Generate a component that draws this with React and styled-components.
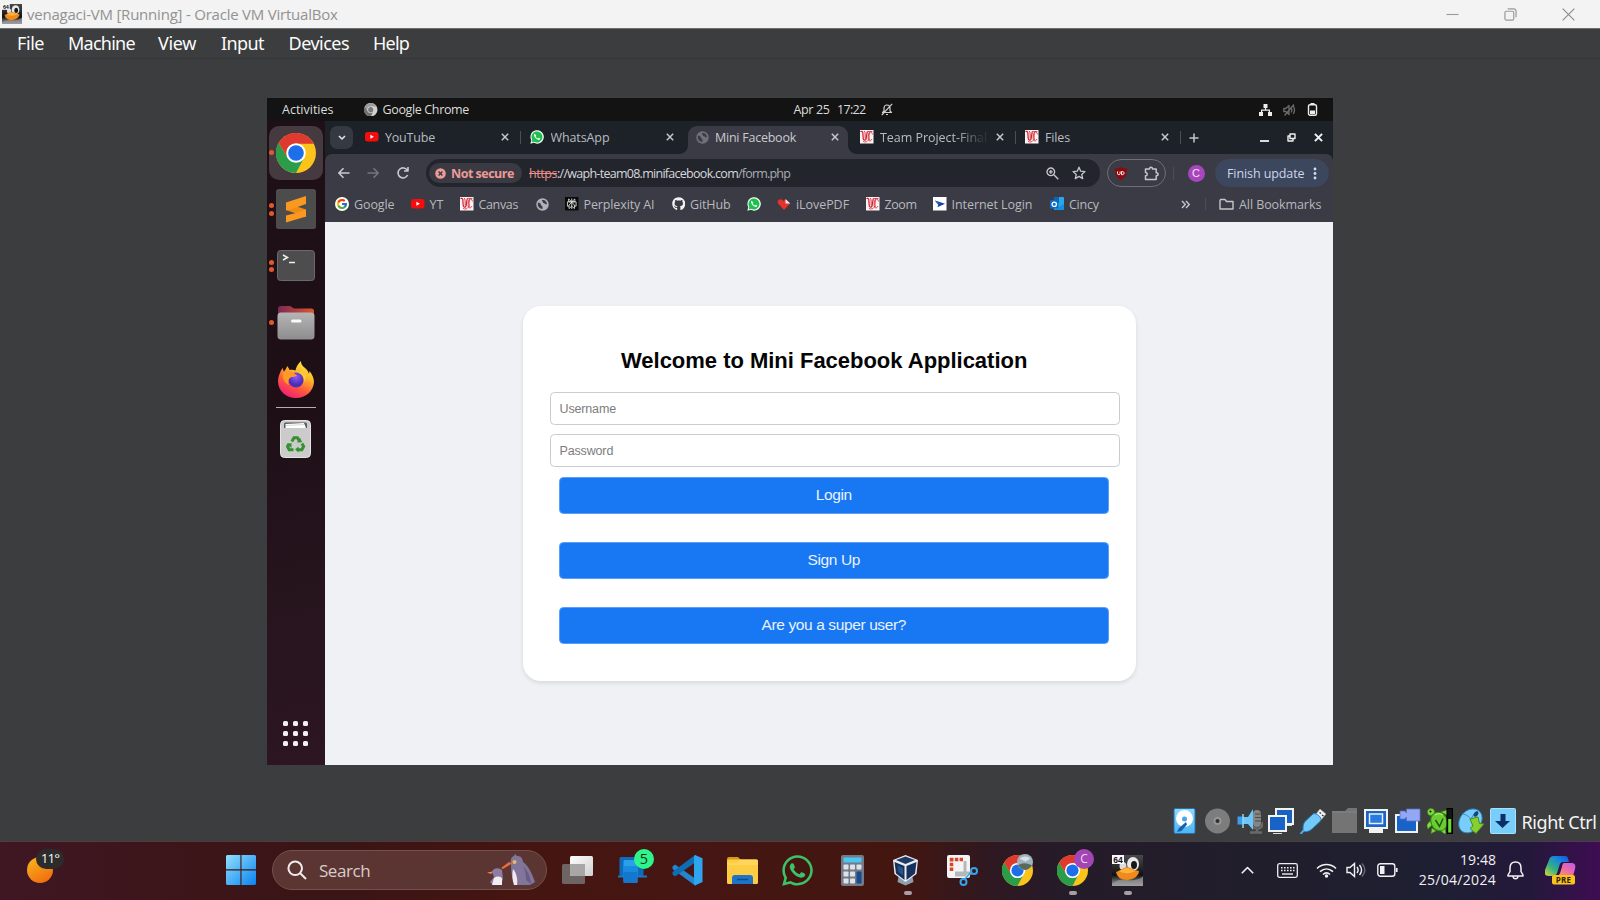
import React from 'react';
import styled, { createGlobalStyle, css } from 'styled-components';
import { FcGoogle } from 'react-icons/fc';
import { FaWhatsapp, FaGithub } from 'react-icons/fa';

const Global = createGlobalStyle`
  body { margin: 0; background: #3b3d3e; }
  * { box-sizing: border-box; }
  svg { display: block; flex: none; }
`;

const ubuntu = '"Open Sans", "Noto Sans", sans-serif';
const segoe = '"Open Sans", "Noto Sans", sans-serif';
const tahoma = '"Noto Sans", sans-serif';
const arial = '"Liberation Sans", Arial, sans-serif';

/* ---------- host window ---------- */
const Desktop = styled.div`
  width: 1600px;
  height: 900px;
  overflow: hidden;
  display: flex;
  flex-direction: column;
  background: #3b3d3e;
`;
const TitleBar = styled.header`
  height: 28px;
  flex: none;
  display: flex;
  align-items: center;
  padding-left: 2px;
  background: #f3f3f3;
  color: #929292;
  font: 15px ${segoe};
  letter-spacing: -0.22px;
`;
const TitleText = styled.span`
  flex: 1;
  padding: 0 0 1px 5px;
  white-space: pre;
`;
const WindowButtons = styled.div`
  display: flex;
  align-items: center;
  width: 170px;
  gap: 45px;
  padding-left: 16px;
`;
const MenuBar = styled.nav`
  height: 31px;
  flex: none;
  display: flex;
  align-items: center;
  padding: 0 0 1px 17px;
  border-top: 1px solid #6d6f70;
  border-bottom: 1px solid #353637;
  background: #3b3d3e;
  color: #fbfbfb;
  font: 18px ${tahoma};
`;
const MenuItem = styled.span`
  width: ${p => p.$w}px;
  letter-spacing: ${p => p.$ls}px;
`;
const Guest = styled.main`
  width: 1066px;
  height: 667px;
  margin: 39px 0 0 267px;
  flex: none;
  display: flex;
  flex-direction: column;
  overflow: hidden;
  font: 12.5px ${ubuntu};
`;

/* ---------- guest top bar ---------- */
const TopBar = styled.div`
  height: 23px;
  flex: none;
  display: flex;
  align-items: center;
  padding-left: 15px;
  background: #131313;
  color: #dcdcdc;
`;
const TopLabel = styled.span`
  width: ${p => p.$w}px;
  padding-left: ${p => p.$l || 0}px;
  white-space: pre;
  letter-spacing: ${p => p.$ls || 0}px;
`;
const TopIcons = styled.div`
  display: flex;
  align-items: center;
  gap: 11px;
  margin-left: 365.5px;
`;
const GuestBody = styled.div`
  flex: 1;
  display: flex;
  min-height: 0;
`;

/* ---------- dock ---------- */
const Dock = styled.aside`
  width: 58px;
  flex: none;
  display: flex;
  flex-direction: column;
  padding-top: 3.5px;
  background: linear-gradient(165deg, #1f0f17 0%, #1e0f17 45%, #26141d 70%, #2c1621 100%);
`;
const DockSlot = styled.div`
  height: 56.6px;
  flex: none;
  display: flex;
  align-items: center;
`;
const DockDots = styled.div`
  width: 9px;
  display: flex;
  flex-direction: column;
  align-items: center;
  gap: 2.5px;
  flex: none;
  margin-right: -7.5px;
  z-index: 1;
  i { width: 5px; height: 5px; border-radius: 50%; background: #e0592c; }
`;
const DockTile = styled.div`
  width: 54px;
  height: 54px;
  border-radius: 10px;
  display: grid;
  place-items: center;
  background: ${p => (p.$active ? '#463a41' : 'transparent')};
`;
const DockRule = styled.div`
  height: 1px;
  flex: none;
  margin: 0 9px 2px;
  background: #b3acb0;
`;
const DockSpacer = styled.div`flex: 1;`;
const AppGrid = styled.div`
  display: grid;
  grid-template-columns: repeat(3, 5px);
  gap: 5px;
  margin: 0 0 19px 16px;
  i { width: 5px; height: 5px; border-radius: 1.5px; background: #f4eff2; }
`;

/* ---------- browser ---------- */
const Browser = styled.section`
  flex: 1;
  display: flex;
  flex-direction: column;
  min-width: 0;
  background: #1c2228;
`;
const TabStrip = styled.div`
  height: 33px;
  flex: none;
  display: flex;
  align-items: center;
  padding-left: 5px;
  color: #b9bbc0;
`;
const TabSearch = styled.div`
  width: 23px;
  height: 23px;
  margin-right: 4.5px;
  border-radius: 7px;
  display: grid;
  place-items: center;
  background: #353941;
`;
const Tab = styled.div`
  width: 165px;
  height: 33px;
  flex: none;
  display: flex;
  align-items: center;
  padding: 0 14px 1px 7.5px;
  position: relative;
  ${p => p.$active && css`
    width: 160px;
    height: 28px;
    margin: 5px 5px 0 0;
    padding: 0 9px 6px 8px;
    background: #3a3b44;
    border-radius: 9px 9px 0 0;
    color: #c9cacf;
    &::before, &::after {
      content: '';
      position: absolute;
      bottom: 0;
      width: 8px;
      height: 8px;
    }
    &::before { left: -8px; background: radial-gradient(circle at 0 0, transparent 7.5px, #3a3b44 8px); }
    &::after { right: -8px; background: radial-gradient(circle at 100% 0, transparent 7.5px, #3a3b44 8px); }
  `}
`;
const TabText = styled.span`
  flex: 1;
  margin: 0 7px 0 6.5px;
  overflow: hidden;
  white-space: nowrap;
  letter-spacing: ${p => p.$ls || 0}px;
  ${p => p.$fade && css`mask-image: linear-gradient(90deg, #000 76px, rgba(0,0,0,.12) 103px);`}
`;
const Divider = styled.i`
  width: 1px;
  height: ${p => p.$h || 13}px;
  flex: none;
  background: #4b4e56;
  margin-left: ${p => p.$l || 0}px;
  margin-right: ${p => p.$r || 0}px;
`;
const TabDivider = styled(Divider)`
  position: absolute;
  right: 1.5px;
  top: 10px;
`;
const StripButtons = styled.div`
  display: flex;
  align-items: center;
  padding-left: 6px;
`;
const WindowControl = styled.div`margin-left: ${p => p.$l}px;`;
const Toolbar = styled.div`
  height: 38px;
  flex: none;
  display: flex;
  align-items: center;
  padding: 0 4.5px 0 11.5px;
  background: #3a3b44;
  border-radius: 7px 7px 0 0;
`;
const NavIcons = styled.div`
  display: flex;
  align-items: center;
  gap: 15.5px;
  width: 89px;
`;
const Omnibox = styled.div`
  width: 674px;
  height: 28px;
  flex: none;
  display: flex;
  align-items: center;
  padding: 0 13.5px 0 3.5px;
  border-radius: 14px;
  background: #23252d;
  color: #d6d7dc;
`;
const SecurityChip = styled.div`
  width: 93px;
  height: 20px;
  flex: none;
  display: flex;
  align-items: center;
  gap: 5px;
  padding-left: 6px;
  margin-right: 7px;
  border-radius: 10px;
  background: #3b3a42;
  color: #ec9b98;
  font-weight: 700;
  letter-spacing: -0.5px;
  white-space: nowrap;
`;
const Scheme = styled.span`
  color: #ec8f8b;
  text-decoration: line-through;
  letter-spacing: -0.44px;
`;
const Host = styled.span`letter-spacing: -0.72px;`;
const Path = styled.span`
  flex: 1;
  color: #aaacb2;
  letter-spacing: -0.8px;
`;
const OmniIcons = styled.div`
  display: flex;
  align-items: center;
  gap: 13.5px;
`;
const ExtensionPill = styled.div`
  width: 59px;
  height: 28px;
  flex: none;
  margin-left: 7px;
  padding: 0 5.5px 0 7.5px;
  display: flex;
  align-items: center;
  justify-content: space-between;
  border: 1px solid #6d6f77;
  border-radius: 14px;
`;
const Avatar = styled.div`
  width: 17px;
  height: 17px;
  flex: none;
  border-radius: 50%;
  background: #a847bd;
  color: #f3e4f6;
  font: 11px/16.5px ${arial};
  text-align: center;
`;
const UpdateButton = styled.div`
  width: 114px;
  height: 28px;
  flex: none;
  margin-left: 10px;
  padding: 0 12px 0 12.5px;
  border-radius: 14px;
  display: flex;
  align-items: center;
  justify-content: space-between;
  background: #3c465d;
  color: #cdd6ea;
  letter-spacing: -0.09px;
`;
const Bookmarks = styled.div`
  height: 30px;
  flex: none;
  display: flex;
  align-items: center;
  padding: 0 0 6px 10px;
  background: #3a3b44;
  color: #b7b9be;
`;
const Bookmark = styled.div`
  width: ${p => p.$w}px;
  flex: none;
  display: flex;
  align-items: center;
  gap: 5px;
  white-space: nowrap;
  letter-spacing: ${p => p.$ls || 0}px;
`;
const GoogleDisc = styled.span`
  width: 14px;
  height: 14px;
  flex: none;
  border-radius: 50%;
  display: grid;
  place-items: center;
  background: #fff;
`;

/* ---------- page ---------- */
const Page = styled.div`
  flex: 1;
  display: flex;
  align-items: flex-start;
  background: #f0f1f5;
`;
const Card = styled.form`
  width: 613.5px;
  height: 375px;
  margin: 84px 0 0 197.5px;
  padding: 37.5px 16px 0 27.5px;
  border-radius: 18px;
  background: #fff;
  box-shadow: 0 2px 4px rgba(0, 0, 0, .1);
  font-family: ${arial};
`;
const Heading = styled.h1`
  height: 34px;
  margin: 0 0 14.5px 71px;
  font: 700 22px/34px ${arial};
  letter-spacing: -0.02px;
  color: #050505;
  white-space: nowrap;
`;
const Field = styled.div`
  height: 33px;
  margin-bottom: 9.25px;
  padding-left: 8.5px;
  border: 1px solid #ccc;
  border-radius: 4.5px;
  color: #7d7d7d;
  font-size: 12.5px;
  line-height: 32px;
  letter-spacing: -0.15px;
`;
const Action = styled.div`
  width: 549.5px;
  height: 37px;
  margin: 0 0 28px 9px;
  border: 1px solid #5c9df6;
  border-radius: 4.5px;
  background: #1877f2;
  color: #e9f2fe;
  font-size: 15.5px;
  line-height: 34px;
  letter-spacing: -0.38px;
  text-align: center;
`;

/* ---------- VM status bar ---------- */
const StatusBar = styled.div`
  height: 76px;
  flex: none;
  display: flex;
  align-items: center;
  justify-content: flex-end;
  gap: 5.65px;
  padding: 36px 3px 0 0;
  color: #f4f4f4;
  font: 18px ${tahoma};
  letter-spacing: -0.42px;
`;
const HostKey = styled.span`
  width: 75.5px;
  padding-top: 2px;
  white-space: nowrap;
`;

/* ---------- taskbar ---------- */
const Taskbar = styled.footer`
  height: 59px;
  flex: none;
  display: flex;
  align-items: center;
  padding-bottom: 2px;
  border-top: 1px solid rgba(120, 100, 100, .45);
  background: linear-gradient(90deg, #3f1724 0, #3b1518 200px, #3a1515 350px, #451511 520px, #451613 700px, #431610 900px, #301820 985px, #251b29 1060px, #211e2b 1250px, #1e1f33 1440px, #24183a 1530px, #3e0d53 1600px);
  font-family: ${segoe};
  color: #f2f0f3;
`;
const Weather = styled.div`
  width: 226px;
  padding-left: 27px;
  flex: none;
  position: relative;
`;
const Sun = styled.div`
  width: 26px;
  height: 26px;
  border-radius: 50%;
  background: linear-gradient(150deg, #f9b91d, #f0620f);
`;
const Temperature = styled.div`
  position: absolute;
  left: 36px;
  top: -8px;
  width: 28px;
  height: 20px;
  border-radius: 10px;
  background: #2d2c2b;
  color: #f5f5f5;
  font-size: 13.5px;
  line-height: 19px;
  letter-spacing: -0.9px;
  text-align: center;
`;
const SearchBox = styled.div`
  width: 275px;
  height: 40px;
  flex: none;
  margin: 0 3px 0 16px;
  padding: 0 11px 0 14px;
  display: flex;
  align-items: center;
  border: 1px solid #754f4c;
  border-radius: 20px;
  background: #5b3532;
  color: #d9cccb;
  font-size: 17px;
  letter-spacing: -0.45px;
  span { flex: 1; padding: 0 0 0 12px; }
`;
const TaskIcon = styled.div`
  width: 55px;
  height: 58px;
  flex: none;
  display: flex;
  flex-direction: column;
  align-items: center;
  padding-top: ${p => p.$top || 14}px;
  position: relative;
  ${p => p.$open && css`
    &::after {
      content: '';
      width: 8px;
      height: 4px;
      margin-top: 5px;
      border-radius: 2px;
      background: #a89ea5;
    }
  `}
`;
const Badge = styled.div`
  position: absolute;
  left: 29px;
  top: 8px;
  width: 20px;
  height: 20px;
  border-radius: 50%;
  background: ${p => p.$bg};
  color: ${p => p.$fg};
  font-size: ${p => p.$size}px;
  line-height: 20px;
  text-align: center;
`;
const ProfilePicture = styled.div`
  position: absolute;
  left: 27px;
  top: 13px;
`;
const Tray = styled.div`
  display: flex;
  align-items: center;
  margin-left: 85.5px;
`;
const TrayItem = styled.div`
  margin-right: ${p => p.$r}px;
`;
const Clock = styled.div`
  width: 86px;
  margin: 0 10.5px 0 12.5px;
  text-align: right;
  font-size: 14px;
  line-height: 20px;
  letter-spacing: 0.05px;
  white-space: nowrap;
  div + div { letter-spacing: 0.3px; }
`;

/* ---------- icons ---------- */
const Chrome = ({ s, mono }) => (
  <svg width={s} height={s} viewBox="0 0 24 24">
    <circle cx="12" cy="12" r="12" fill={mono ? '#d0d0d0' : '#fcc31a'} />
    <path d="M1.6 6A12 12 0 0 0 12 24l4.85-9.2L12 12l-4.85 2.8z" fill={mono ? '#707070' : '#2a9c4a'} />
    <path d="M22.6 6.4A12 12 0 0 0 1.6 6l5.55 8.8L12 12V6.4z" fill={mono ? '#9c9c9c' : '#df3a30'} />
    <circle cx="12" cy="12" r="5.9" fill={mono ? '#e6e6e6' : '#fff'} />
    <circle cx="12" cy="12" r="4.7" fill={mono ? '#777' : '#1c6fe8'} />
  </svg>
);
const YouTube = () => (
  <svg width="13.5" height="13.5" viewBox="0 0 14 14"><rect y="2" width="14" height="10" rx="2.6" fill="#f60c0c" /><path d="M5.6 4.9v4.2L9.2 7z" fill="#fff" /></svg>
);
const WhatsAppMini = () => (
  <svg width="14" height="14" viewBox="0 0 24 24">
    <path d="M.6 23.4 2.2 17.6A11.5 11.5 0 1 1 6.5 21.9z" fill="#f3fbf5" />
    <path d="M2.8 21.2 4 17A9.4 9.4 0 1 1 7.2 20.1z" fill="#1fbf4f" />
    <path d="M8.3 6.6c-1 .3-1.6 1.5-1.3 2.9.7 3.6 4.2 7 7.8 7.5 1.4.2 2.6-.6 2.7-2 0-.4-2.3-1.6-2.7-1.5-.5.2-.8 1.3-1.4 1.2-1.7-.6-3-1.9-3.7-3.5 0-.5.9-.9.9-1.4z" fill="#fff" />
  </svg>
);
const Globe = ({ c }) => (
  <svg width="13" height="13" viewBox="0 0 24 24"><circle cx="12" cy="12" r="11.5" fill={c} /><path d="M4 8.5c3 .2 5 1.8 5 3.8 0 1.6 3 1.8 3 4v3.8C7 20 3.2 16 3.2 12zM11 3.5c0 2 1.6 2.3 1.6 4.2 0 1.6 2.6 1.1 3.2 2.6.6 1.4 2.4 1.7 4.4 1.2.3-3.6-2.3-7-5.6-8z" fill="#3a3b44" /></svg>
);
const Cincinnati = () => (
  <svg width="13.5" height="13.5" viewBox="0 0 14 14">
    <rect width="14" height="14" fill="#fbf4f4" />
    <g fill="none" stroke="#d5202f" strokeLinecap="round">
      <path d="M1 1.5c1.6-.3 2 .8 2 2.5l.3 4.500c.2 2.500 2.300 2.800 3 .6L7.500 2" strokeWidth="1.300" />
      <path d="M4.700 1.300c1 .6.6 4.500.6 7M12.800 4.200c-.4-3-3.300-3.600-4 .3-.8 4-.4 6.500 1.200 6.800 1 .2 1.800-.6 2.200-1.600" strokeWidth=".9" />
      <path d="M10.300 2.500c-1 2-1 5-.6 7.500M3.500 12c2 1.200 4 .2 5-1.200M8 1.500h4.500" strokeWidth=".8" />
    </g>
  </svg>
);
const Cross = ({ s = 8, c = '#c6c7cb', w = 1.5 }) => (
  <svg width={s} height={s} viewBox="0 0 8 8"><path d="M.8.8l6.4 6.4M7.2.8.8 7.2" stroke={c} strokeWidth={w * 8 / s} fill="none" /></svg>
);
const Perplexity = () => (
  <svg width="13.5" height="13.5" viewBox="0 0 14 14"><rect width="14" height="14" fill="#0a0a0a" /><path d="M7 1.5v11M3.8 2l3.2 3 3.2-3v3H3.8zM2.5 5h9v4.5H9.8M2.5 5v4.5h1.7M7 5.500 4.200 8.300V12L7 9.500 9.800 12V8.300z" fill="none" stroke="#e2e2e2" strokeWidth=".9" /></svg>
);
const Heart = () => (
  <svg width="14" height="14" viewBox="0 0 14 14"><path d="M7 13 1 6.5C-.6 4 2.5.8 5.5 3l1 1L8 2.5l5 4.3z" fill="#e5322b" /><path d="M8.5 2v4.6h4.8z" fill="#fbe9e8" /></svg>
);
const Login = () => (
  <svg width="13.5" height="13.5" viewBox="0 0 14 14"><rect width="14" height="14" fill="#fff" /><path d="M2 3.5 12.5 7 4.5 10.5 5.5 8z" fill="#163f9e" /><path d="M2 3.5 8 7H4.5z" fill="#2a6ad2" /></svg>
);
const Outlook = () => (
  <svg width="14" height="14" viewBox="0 0 14 14"><rect x="4" y="0" width="10" height="13" rx="1" fill="#28a8ea" /><path d="M4 0h5v6H4z" fill="#0c64b5" /><path d="M4 13 14 7v6z" fill="#1490df" /><rect y="3" width="8.5" height="8.5" rx="1" fill="#0a6cc4" /><circle cx="4.25" cy="7.25" r="2.2" fill="none" stroke="#fff" strokeWidth="1.3" /></svg>
);
const Line = ({ w = 14, h = w, vb = '0 0 14 14', c = '#c4c6cb', sw = 1.5, d, fill = 'none' }) => (
  <svg width={w} height={h} viewBox={vb}><path d={d} fill={fill} stroke={c} strokeWidth={sw} strokeLinejoin="round" /></svg>
);
const Sublime = () => (
  <svg width="40" height="40" viewBox="0 0 40 40"><rect width="40" height="40" rx="2.5" fill="#4c4c4c" /><path d="m10 14 20 6.5V28l-20-7z" fill="#ef8c17" /><path d="M10 13.5 30 7v8l-10 3.500-10 3z" fill="#fb9820" /><path d="m20 24 10-3.500v7L10 33.500v-7z" fill="#fb9820" /></svg>
);
const Terminal = () => (
  <svg width="38" height="31" viewBox="0 0 38 31"><rect x=".5" y=".5" width="37" height="30" rx="3" fill="#4d4d4d" stroke="#6a6a6a" /><path d="M6 5 10.5 7.5 6 10M12 12.5h6" stroke="#f0f0f0" strokeWidth="1.5" fill="none" /></svg>
);
const FilesIcon = () => (
  <svg width="38" height="34" viewBox="0 0 38 34">
    <defs><linearGradient id="fl" x1="0" x2="1"><stop stopColor="#7a2a55" /><stop offset="1" stopColor="#e0562b" /></linearGradient><linearGradient id="fg" x1="0" x2="0" y1="0" y2="1"><stop stopColor="#b5b5b5" /><stop offset="1" stopColor="#8d8d8d" /></linearGradient></defs>
    <path d="M1 3a3 3 0 0 1 3-3h9l4 2.5h17a3 3 0 0 1 3 3V15H1z" fill="url(#fl)" /><rect x=".5" y="6.5" width="37" height="27" rx="3.5" fill="url(#fg)" /><rect x="14" y="13.5" width="10.5" height="3" rx="1.5" fill="#fafafa" />
  </svg>
);
const Firefox = () => (
  <svg width="36" height="37" viewBox="0 0 36 37">
    <defs><linearGradient id="ff" x1=".8" y1="0" x2=".25" y2="1"><stop stopColor="#fff04a" /><stop offset=".35" stopColor="#ffb627" /><stop offset=".65" stopColor="#ff5a3c" /><stop offset="1" stopColor="#f0187c" /></linearGradient><radialGradient id="fp" cx=".5" cy=".3"><stop stopColor="#9059ff" /><stop offset="1" stopColor="#4d2fb5" /></radialGradient></defs>
    <path d="M2 12C3 9 4 8 5 7c0 2 .5 3 1 3.5C8 8 9 6 9 5c1 1 2 2 2.5 4 2-.5 4-.5 6 .5C18 6 20 3 23 0c0 4 2 5 4 7 2 1.5 3 3 4 6l.5-3C34 13 36 17 36 21c-.5 9-8 16-18 16S0 30 0 20c0-3 1-6 2-8z" fill="url(#ff)" />
    <circle cx="18" cy="19" r="7.5" fill="url(#fp)" />
    <path d="M5 12c4-2 9-2 12 1l2 1.5c-2 2-6 .5-8 3.5-1 2-1 4 0 6-4-2-7-6-6-12z" fill="#ff9a26" />
    <path d="M20 12c4 0 7 4 6 9 3-3 3-8-1-11z" fill="#ffc83a" />
  </svg>
);
const Trash = () => (
  <svg width="31" height="38" viewBox="0 0 31 38"><rect x=".5" y=".5" width="30" height="37" rx="4" fill="#cbcbcb" stroke="#e4e4e4" /><path d="M4 8V4a1.5 1.5 0 0 1 1.5-1.5h20A1.5 1.5 0 0 1 27 4v4z" fill="#5c5c5c" /><path d="m5.5 4 18.5-1 2 5H5.5z" fill="#fff" /><path d="m6 5.5 19-1" stroke="#bbb" strokeWidth=".6" />
    <g fill="none" stroke="#35902f" strokeWidth="3"><path d="M11.8 21.5 14 17.8h3.5l1.7 2.8M22 23.5l1.6 3-1.8 3.2h-4M13.5 29.7H9.2L7.5 26.5l1.6-2.7" /></g><path d="m17 22.5 5.2-.3-2.2-4.5zM18.5 26.5v6l-3.5-3zM6.5 24l5-1v5z" fill="#35902f" /></svg>
);
const UBlock = () => (
  <svg width="12" height="13" viewBox="0 0 12 13"><path d="M6 0c2 1.5 3.5 1.6 6 1.6C12 7.5 11 10 6 13 1 10 0 7.5 0 1.6 2.5 1.6 4 1.5 6 0z" fill="#8a0b0b" /><path d="M2.5 4.5v2c0 1.6 2.6 1.6 2.6 0v-2M6.6 4.5v3.2h.8c2.2 0 2.2-3.2 0-3.2z" fill="none" stroke="#fff" strokeWidth="1" /></svg>
);

/* status bar pictograms, all on a 26px square */
const S = ({ children }) => <svg width="26" height="26" viewBox="0 0 26 26">{children}</svg>;
const statusIcons = [
  <S key="hdd"><defs><linearGradient id="sb" x1="0" x2="0" y1="0" y2="1"><stop stopColor="#8fd8ff" /><stop offset="1" stopColor="#4bb4f5" /></linearGradient></defs><rect x="1" y=".5" width="21" height="25" rx="1.5" fill="url(#sb)" stroke="#2a6fa8" /><circle cx="11.5" cy="10.5" r="8.5" fill="#fff" /><circle cx="11.5" cy="11" r="2.5" fill="#4aa6ea" /><path d="m13 14-7 6-2 4 4.5-1L14 16.5z" fill="#1a5fae" /></S>,
  <S key="cd"><circle cx="12.5" cy="13" r="12.5" fill="#7d7d7d" /><circle cx="12.5" cy="13" r="4" fill="#969696" /><circle cx="12.5" cy="13" r="2" fill="#2f2f2f" /></S>,
  <S key="au"><rect x="16" y="2" width="8" height="17" rx="4" fill="#858585" /><path d="M14 13c0 10 12 10 12 1M20 20v4M13 24.5h12" stroke="#6a6a6a" strokeWidth="2.5" fill="none" /><path d="M18 6h6M18 9.5h6M18 13h6" stroke="#4c4c4c" strokeWidth="1" fill="none" /><path d="M.5 8.5H6v8H.5z" fill="#3d9fe8" /><path d="M6 9h5l5-8v21l-5-6H6z" fill="#6cc6fb" /><path d="M6 6v14" stroke="#8fd8ff" strokeWidth="1.5" /></S>,
  <S key="nw"><rect x="8" y="1" width="17" height="15" fill="#1a62bf" stroke="#f3f3f3" strokeWidth="2" /><rect x="1" y="8" width="17" height="15" fill="#1763c8" stroke="#f3f3f3" strokeWidth="2" /><path d="M5 25.5h9M19 17.5h5" stroke="#ddd" /></S>,
  <S key="us"><path d="M16 6 20 1l6 5-5 6z" fill="#f2f2f2" stroke="#999" strokeWidth=".6" /><path d="m19.5 4.5 1.5 1M22 7l1.5 1" stroke="#333" strokeWidth="1.5" /><path d="M5 13.5 13 6c3-2 10 4 7.5 7L12 21c-3 2.5-6 3-8.5 2.5C2.5 20 3 16 5 13.5z" fill="#74c9fb" stroke="#257fc2" /><path d="m4 22-3.5 4" stroke="#4ca9ee" strokeWidth="2" /></S>,
  <S key="sf"><path d="M0 3h13l3-3h9v25H0z" fill="#747474" /><path d="M0 4h25" stroke="#848484" /></S>,
  <S key="di"><path d="M1 1h24v20h-5v4H6v-4H1z" fill="#f2f2f2" /><rect x="3" y="3" width="20" height="16" fill="#1c65c5" /><rect x="6.5" y="6" width="13" height="9.5" fill="#2a7ae2" stroke="#e6eefa" strokeWidth="1.5" /></S>,
  <S key="re"><rect x="1" y="7" width="21" height="17" fill="#1763c8" stroke="#f2f2f2" strokeWidth="2" /><path d="M5 3h5l1.5 2V1H25v12H11.5V9L10 11H5z" fill="#93a7f4" stroke="#5870c9" strokeWidth=".8" /></S>,
  <S key="tu"><g fill="#7ddb3d" stroke="#3f8f16" strokeWidth=".6"><circle cx="4" cy="4" r="3.5" /><path d="M3 13-.2 17l1 4 4.200-4zM5 20l-1 5.500L9 23zM14 23l3 2.500h2L18 20zM14 4l6-2v5z" /></g><circle cx="3.5" cy="3.5" r="1" fill="#111" /><ellipse cx="12" cy="13.5" rx="8" ry="9.5" transform="rotate(-25 12 13.5)" fill="#6ccc33" stroke="#3a8a17" /><path d="m8.500 12 4 6.500 3.500-8" stroke="#1d5c0b" strokeWidth="1.500" fill="none" /><path d="M8 7c3-2 6-1.500 8 0" stroke="#a4ef6a" strokeWidth="1.200" fill="none" /><rect x="20" y=".5" width="5.500" height="25" fill="#141414" stroke="#000" /><rect x="21.200" y="11" width="3" height="13.500" fill="#66df2c" /></S>,
  <S key="mo"><path d="M2 21C-2 14 4 2 14 1c9-1 12 8 9 14-5 10-17 13-21 6z" fill="#79cdfb" stroke="#2c84c4" /><path d="M4 6c4 0 8 3 9 6M13 12c1-4 4-8 7-9" stroke="#3b8dc8" fill="none" /><ellipse cx="18" cy="6" rx="2" ry="3" transform="rotate(35 18 6)" fill="#12477d" /><path d="m12 11 8-2 1.500 6.500 4.500.5-8 9.500-6-5 3-2.500z" fill="#86cf32" stroke="#4c8b14" /></S>,
  <S key="hk"><rect x=".5" y=".5" width="25" height="25" rx="1" fill="#78cdfb" stroke="#a9e0fd" /><path d="M10.5 6h5v7H20l-7.5 7L5 13h5.500z" fill="#0d2f66" /></S>,
];

const T = ({ children }) => <svg width="31" height="31" viewBox="0 0 31 31">{children}</svg>;
const WindowsLogo = () => (
  <svg width="30" height="30" viewBox="0 0 30 30"><defs><linearGradient id="wl" x1="0" y1="0" x2="30" y2="30" gradientUnits="userSpaceOnUse"><stop stopColor="#8fe0fd" /><stop offset="1" stopColor="#0b83ef" /></linearGradient></defs><path d="M1 0h13.4v14.3H0V1zM15.5 0H29l1 1v13.3H15.5zM0 15.4h14.4V30H1l-1-1zM15.5 15.4H30V29l-1 1H15.5z" fill="url(#wl)" /></svg>
);
const Penguins = () => (
  <svg width="48" height="32" viewBox="0 0 48 32">
    <path d="M24 10c-1-4 0-7 3-8l1-2 2 2c4-.5 6 3 6 6 6 4 9 12 12 20l-5 3H28c-3-6-4-13-4-21z" fill="#82759a" />
    <path d="M26 15c3 3 5 10 4 16h-3c-2-5-2-11-1-16z" fill="#efe8f0" /><path d="M36 12c5 5 8 12 8 18l-5-4c0-6-1-10-3-14z" fill="#6b5c85" />
    <path d="m14 14 8-6 3 1.5L16 15z" fill="#ee6b3c" /><circle cx="27.500" cy="8" r="2" fill="#e9b768" />
    <path d="M5 18c1-4 6-5 10-2l1 9-2 6H6l-3-3 4-5z" fill="#8b7ea2" /><path d="M7 24c3-2 7-2 8 1v6H5z" fill="#f2edf3" /><path d="m0 18.500 6-1-2 2.500z" fill="#ef8b4a" />
  </svg>
);
const TaskView = () => <T><defs><linearGradient id="tw" x1="0" y1="0" x2="1" y2="1"><stop stopColor="#fff" /><stop offset="1" stopColor="#cfcfcf" /></linearGradient></defs><rect x="0" y="9" width="23" height="20" rx="1.5" fill="#6d6463" /><rect x="8" y="1" width="23" height="20" rx="1.5" fill="url(#tw)" /><path d="M8 9h15v12H9.5L8 19.5z" fill="#a9a7a6" /></T>;
const PhoneLink = () => <T><rect x="2.5" y="2" width="24" height="20" rx="1.5" fill="#0f6cbd" /><path d="M1 20.500h29v2H1z" fill="#1976c5" /><rect x="6.500" y="5" width="14" height="23" rx="1.500" fill="#2b9fea" /><path d="M6.500 11h14v6h-14z" fill="#1a8ae0" /><path d="M6.500 17h14v9.500A1.500 1.500 0 0 1 19 28H8a1.500 1.500 0 0 1-1.500-1.500z" fill="#1277cd" /></T>;
const VSCode = () => <T><path d="m.5 11.5 2.5-2L24 24v6l-1 .5L.5 14z" fill="#2286d0" /><path d="m.5 19.5 2.5 2L24 7V0h-1L.5 17z" fill="#0f6db4" /><path d="m23 0 7.500 3.200V27L23 30.500l-1-1.500V1.500z" fill="#2fa4ef" /></T>;
const Explorer = () => <T><path d="M0 4a2 2 0 0 1 2-2h9l3 3v5H0z" fill="#d99a12" /><rect y="4.5" width="31" height="24.5" rx="1.5" fill="#fdcc45" /><path d="M0 8h9l4-3.5h16.500A1.500 1.500 0 0 1 31 6v4H0z" fill="#ffd65b" /><path d="M5 29v-6a3 3 0 0 1 3-3h15a3 3 0 0 1 3 3v6z" fill="#1c74c6" /><path d="M10 24.500h11" stroke="#0e4a8a" strokeWidth="1.500" /></T>;
const Calculator = () => <svg width="23" height="31" viewBox="0 0 23 31"><rect width="23" height="31" rx="2" fill="#747b84" /><rect x="2.5" y="2.5" width="18" height="5" rx=".8" fill="#48c6f5" /><g fill="#dde2ea">{[9.5, 16.5, 23.5].map(y => [2.5, 9, 15.5].map(x => !(x > 15 && y > 10) && <rect key={x + '-' + y} x={x} y={y} width="5" height="5" rx=".8" />))}</g><rect x="15.5" y="16.5" width="5" height="12" rx=".8" fill="#164b92" /></svg>;
const VirtualBox = () => <T><path d="M6.500 22h14l1 5-8 3.500-8-3.500z" fill="#8f9dac" /><path d="M13.500 0 26 5l-1.500 14-11 8-11-8L1 5z" fill="#e7edf3" /><path d="M13.500 1.500 23 5l-9.500 4L4 5z" fill="#1e3a63" /><path d="m2.500 7 10 4v14L4 18.500zM24.500 7l-10 4v14l8.500-6.500z" fill="#15315c" /><path d="m5.500 10.500 5.500 2.500v7.500L6.500 17z" fill="#27528c" /></T>;
const Snip = () => <T><rect x="0" y="0" width="23" height="23" rx="2" fill="#f4f4f4" /><path d="M3 4.5h13M4.5 3v13" stroke="#d8432b" strokeWidth="3.5" strokeDasharray="3.5 1.3" fill="none" /><path d="M18 6v14H8M8 18h17" stroke="#b5b8bb" strokeWidth="3" fill="none" /><g fill="none" stroke="#35a4e8" strokeWidth="2"><circle cx="27" cy="16" r="3" /><circle cx="16.5" cy="27" r="3" /></g><path d="m24 17-6 7" stroke="#35a4e8" strokeWidth="1.5" /></T>;
const LinuxVM = ({ s }) => (
  <svg width={s} height={s} viewBox="0 0 31 31"><defs><linearGradient id="lv" x1="0" x2="0" y1="0" y2="1"><stop stopColor="#4a4a4a" /><stop offset=".65" stopColor="#111" /><stop offset="1" stopColor="#aaa" /></linearGradient></defs><rect width="31" height="31" fill="url(#lv)" /><path d="M0 31c2-6 8-7 15-6s14-1 16-4v10z" fill="#9a9a9a" opacity=".7" /><ellipse cx="21" cy="9" rx="6" ry="7" fill="#e9e9e9" /><ellipse cx="22" cy="10" rx="3" ry="4" fill="#171717" /><ellipse cx="11" cy="11" rx="3.5" ry="4" fill="#ddd" /><path d="M4 17c4-1 8-5 11-5s6 3 12 4c0 5-6 9-12 9S5 22 4 17z" fill="#f08a1c" /><path d="M7 16c4-1 6-3 8-3s4 2 8 3c-5 3-11 3-16 0z" fill="#fdb33f" /><rect x="0" y="0" width="12" height="9" fill="#fafafa" /><text x="6" y="7.8" fontSize="8.5" fontWeight="700" fontFamily="Liberation Sans" textAnchor="middle" fill="#111">64</text></svg>
);
const Copilot = () => (
  <svg width="31" height="30" viewBox="0 0 31 30"><defs><linearGradient id="c1" x1="0" y1="1" x2="1" y2="0"><stop stopColor="#e6d53a" /><stop offset=".35" stopColor="#38b27c" /><stop offset=".7" stopColor="#1684e0" /><stop offset="1" stopColor="#1b4fd0" /></linearGradient><linearGradient id="c2" x1="1" y1="0" x2="0" y2="1"><stop stopColor="#c05af0" /><stop offset=".5" stopColor="#ef6aa7" /><stop offset="1" stopColor="#fb9a50" /></linearGradient></defs>
    <path d="M9 1h11c3 0 3 2 4 6h-6c-3 0-3 2-5 8-1 4-2 6-5 6H4c-4 0-5-2-4-6l4-10c1-3 2-4 5-4z" fill="url(#c1)" /><path d="M19 8h7c4 0 5 2 4 6l-2 7H12c3-1 3-3 5-9 .6-3 1-4 2-4z" fill="url(#c2)" />
    <rect x="7" y="20" width="23" height="9.5" rx="2" fill="#fbc21c" /><text x="18.5" y="27.7" fontSize="8" fontWeight="700" letterSpacing=".3" fontFamily="Open Sans" textAnchor="middle" fill="#2a2312">PRE</text></svg>
);
const Person = () => <svg width="16" height="16" viewBox="0 0 17 17"><circle cx="8.5" cy="8.5" r="8.5" fill="#9fb4be" /><path d="M1 12c4-3 9-3 15 0-2 3-5 5-7.5 5S3 15 1 12z" fill="#59695e" /><path d="M3 5c3-3 8-3 11 0L9 8z" fill="#d6e2e8" /></svg>;

const menu = [['File', 51, -0.42], ['Machine', 90, -0.75], ['View', 63, -0.35], ['Input', 67.5, -0.6], ['Devices', 84.5, -0.5], ['Help', 60, -0.8]];
const tabs = [
  { icon: <YouTube />, text: 'YouTube', ls: -0.2, rule: true },
  { icon: <WhatsAppMini />, text: 'WhatsApp', ls: -0.1 },
  { icon: <Globe c="#6f7178" />, text: 'Mini Facebook', ls: -0.24, active: true },
  { icon: <Cincinnati />, text: 'Team Project-Final', ls: -0.04, rule: true, fade: true },
  { icon: <Cincinnati />, text: 'Files', ls: -0.14, rule: true },
];
const bookmarks = [
  [<GoogleDisc><FcGoogle size={12} /></GoogleDisc>, 'Google', 76, -0.1],
  [<YouTube />, 'YT', 49, 0],
  [<Cincinnati />, 'Canvas', 75.5, -0.35],
  [<Globe c="#b0b2b8" />, '', 29.5, 0],
  [<Perplexity />, 'Perplexity AI', 106.5, -0.12],
  [<FaGithub size={13.5} color="#f2f2f2" />, 'GitHub', 75.5, -0.12],
  [<WhatsAppMini />, '', 30, 0],
  [<Heart />, 'iLovePDF', 89, -0.06],
  [<Cincinnati />, 'Zoom', 67, -0.4],
  [<Login />, 'Internet Login', 117, -0.06],
  [<Outlook />, 'Cincy', 131, -0.25],
];
const dockApps = [
  { dots: 1, icon: <Chrome s={40} />, active: true },
  { dots: 2, icon: <Sublime /> },
  { dots: 2, icon: <Terminal /> },
  { dots: 1, icon: <FilesIcon /> },
  { dots: 0, icon: <Firefox /> },
];
const range = n => Array.from({ length: n }, (_, i) => i);

export default function App() {
  return (
    <Desktop>
      <Global />
      <TitleBar>
        <LinuxVM s={20} />
        <TitleText>venagaci-VM [Running] - Oracle VM VirtualBox</TitleText>
        <WindowButtons>
          <Line w={13} c="#9a9a9a" sw={1.2} d="M.5 7h13" />
          <Line w={13} c="#9a9a9a" sw={1.3} d="M1 5a1.5 1.5 0 0 1 1.5-1.5H9A1.5 1.5 0 0 1 10.5 5v6.5A1.5 1.5 0 0 1 9 13H2.5A1.5 1.5 0 0 1 1 11.5zM4 1h6.5A2.8 2.8 0 0 1 13 3.800V10" />
          <Line w={13} c="#8d8d8d" sw={1.3} d="M.7.7l12.6 12.6M13.3.7.7 13.3" />
        </WindowButtons>
      </TitleBar>
      <MenuBar>{menu.map(([t, w, ls]) => <MenuItem key={t} $w={w} $ls={ls}>{t}</MenuItem>)}</MenuBar>

      <Guest>
        <TopBar>
          <TopLabel $w={82}>Activities</TopLabel>
          <Chrome s={13.5} mono />
          <TopLabel $w={416} $l={5} $ls={-0.36}>Google Chrome</TopLabel>
          <TopLabel $w={43.5} $ls={-0.35}>Apr 25</TopLabel>
          <TopLabel $w={44} $ls={-0.7}>17:22</TopLabel>
          <Line w={12} h={13} vb="0 0 12 13" c="#cfcfcf" sw={1.2} d="M1.5 9.5 3 8V5a3 3 0 0 1 6 0v3l1.5 1.5zM5 11.5h2M.8 12 11.200.8" />
          <TopIcons>
            <svg width="13" height="12" viewBox="0 0 13 12"><path d="M4.5 0h4v4H7.1v1.5H11V8h2v4H9V8h.8V6.700H3.200V8H4v4H0V8h2V5.500h3.900V4H4.500z" fill="#ededed" /></svg>
            <Line w={13} h={12} vb="0 0 13 12" c="#6c6c6c" sw={1.3} d="M.8 4.5h2L6 1.5v9L2.8 7.5h-2zM8 3.5c1 1.5 1 3.5 0 5M10.3 2c1.5 2.5 1.5 5.5 0 8M1.5 11.5 11 .5" />
            <svg width="11" height="13" viewBox="0 0 11 13"><rect x="1.5" y="1.7" width="8" height="10.5" rx="1.5" fill="none" stroke="#ededed" strokeWidth="1.4" /><path d="M3.5 0h4v2h-4zM3 7.5h5V11H3z" fill="#ededed" /></svg>
          </TopIcons>
        </TopBar>
        <GuestBody>
          <Dock>
            {dockApps.map((a, i) => (
              <DockSlot key={i}>
                <DockDots>{range(a.dots).map(n => <i key={n} />)}</DockDots>
                <DockTile $active={a.active}>{a.icon}</DockTile>
              </DockSlot>
            ))}
            <DockRule />
            <DockSlot>
              <DockDots />
              <DockTile><Trash /></DockTile>
            </DockSlot>
            <DockSpacer />
            <AppGrid>{range(9).map(n => <i key={n} />)}</AppGrid>
          </Dock>
          <Browser>
            <TabStrip>
              <TabSearch><Line w={8} h={6} vb="0 0 8 6" d="m1 1 3 3 3-3" c="#e2e3e6" sw={1.6} /></TabSearch>
              {tabs.map((t, i) => (
                <Tab key={i} $active={t.active}>
                  {t.icon}
                  <TabText $ls={t.ls} $fade={t.fade}>{t.text}</TabText>
                  <Cross />
                  {t.rule && <TabDivider />}
                </Tab>
              ))}
              <StripButtons>
                <Line w={10} vb="0 0 10 10" d="M5 .5v9M.5 5h9" sw={1.5} />
                <WindowControl $l={61}><Line w={9} h={9} vb="0 0 9 9" d="M0 8h9" c="#f1f1f1" sw={1.8} /></WindowControl>
                <WindowControl $l={18}><Line w={9} vb="0 0 9 9" d="M3 1h5v4.5H3zM2.8 3H1v5h5V6" c="#f1f1f1" sw={1.4} /></WindowControl>
                <WindowControl $l={18}><Cross s={9} c="#f1f1f1" w={2} /></WindowControl>
              </StripButtons>
            </TabStrip>
            <Toolbar>
              <NavIcons>
                <Line w={14} d="M12.5 7H2M6.5 2.3 1.8 7l4.700 4.700" c="#c9cad0" sw={1.6} />
                <Line w={14} d="M1.5 7H12M7.5 2.3 12.2 7l-4.700 4.700" c="#74767d" sw={1.6} />
                <Line w={14} d="M11.6 9A5 5 0 1 1 11.3 4.3M12 1v4H8" c="#c9cad0" sw={1.6} />
              </NavIcons>
              <Omnibox>
                <SecurityChip>
                  <svg width="11" height="11" viewBox="0 0 11 11"><circle cx="5.5" cy="5.5" r="5.3" fill="#ec9b98" /><path d="m3.6 3.6 3.8 3.8M7.4 3.6 3.6 7.4" stroke="#3b3a42" strokeWidth="1.4" /></svg>
                  Not secure
                </SecurityChip>
                <Scheme>https</Scheme><Host>://waph-team08.minifacebook.com</Host><Path>/form.php</Path>
                <OmniIcons>
                  <Line w={13} d="M9.3 5.2a4 4 0 1 1-8.2 0 4 4 0 1 1 8.2 0zM8.2 8.2l5 5M5.2 3.2v4M3.2 5.2h4" sw={1.5} />
                  <Line w={14} d="m7 1.2 1.7 4 4.3.4-3.3 2.8 1 4.2L7 10.4l-3.7 2.2 1-4.2L1 5.6l4.3-.4z" sw={1.3} />
                </OmniIcons>
              </Omnibox>
              <ExtensionPill>
                <UBlock />
                <Line w={15} vb="0 0 15 15" d="M1.5 3h4c0-2.5 3-2.5 3 0h3.7v3.8c2.5 0 2.5 3 0 3v3.7H1.5V9.8c2.3 0 2.3-3.2 0-3.2z" sw={1.5} />
              </ExtensionPill>
              <Divider $l={7.5} $r={13.5} />
              <Avatar>C</Avatar>
              <UpdateButton>
                Finish update
                <svg width="4" height="13" viewBox="0 0 4 13"><g fill="#d3dbee"><circle cx="2" cy="2" r="1.4" /><circle cx="2" cy="6.5" r="1.4" /><circle cx="2" cy="11" r="1.4" /></g></svg>
              </UpdateButton>
            </Toolbar>
            <Bookmarks>
              {bookmarks.map(([icon, t, w, ls], i) => <Bookmark key={i} $w={w} $ls={ls}>{icon}{t}</Bookmark>)}
              <Line w={9} vb="0 0 9 9" d="m1 1 3.3 3.5L1 8M5 1l3.3 3.5L5 8" sw={1.4} />
              <Divider $l={14.5} $r={13.5} $h={12} />
              <Bookmark $w={104} $ls={-0.08}>
                <Line w={15} h={13} vb="0 0 15 13" d="M1 2.5V11h13V3.5H7.5L6 1.5H1.5z" sw={1.4} />
                All Bookmarks
              </Bookmark>
            </Bookmarks>
            <Page>
              <Card>
                <Heading>Welcome to Mini Facebook Application</Heading>
                <Field>Username</Field>
                <Field>Password</Field>
                <Action>Login</Action>
                <Action>Sign Up</Action>
                <Action>Are you a super user?</Action>
              </Card>
            </Page>
          </Browser>
        </GuestBody>
      </Guest>

      <StatusBar>
        {statusIcons}
        <HostKey>Right Ctrl</HostKey>
      </StatusBar>

      <Taskbar>
        <Weather><Sun /><Temperature>11°</Temperature></Weather>
        <WindowsLogo />
        <SearchBox>
          <Line w={20} vb="0 0 20 20" c="#f0eceb" sw={2} d="M15 8.3a6.8 6.8 0 1 1-13.6 0 6.8 6.8 0 1 1 13.6 0zM13.2 13.2 19 19" />
          <span>Search</span>
          <Penguins />
        </SearchBox>
        <TaskIcon><TaskView /></TaskIcon>
        <TaskIcon><PhoneLink /><Badge $bg="#2ef58b" $fg="#10301e" $size={14.5}>5</Badge></TaskIcon>
        <TaskIcon><VSCode /></TaskIcon>
        <TaskIcon><Explorer /></TaskIcon>
        <TaskIcon $top={12}><FaWhatsapp size={35} color="#3cc267" /></TaskIcon>
        <TaskIcon><Calculator /></TaskIcon>
        <TaskIcon $open><VirtualBox /></TaskIcon>
        <TaskIcon><Snip /></TaskIcon>
        <TaskIcon><Chrome s={31} /><ProfilePicture><Person /></ProfilePicture></TaskIcon>
        <TaskIcon $open><Chrome s={31} /><Badge $bg="#a246b5" $fg="#eed8f2" $size={12}>C</Badge></TaskIcon>
        <TaskIcon $open><LinuxVM s={31} /></TaskIcon>
        <Tray>
          <TrayItem $r={23}><Line w={13} h={8} vb="0 0 13 8" d="M.8 7.2 6.5 1.5l5.7 5.7" c="#f2f2f4" sw={1.6} /></TrayItem>
          <TrayItem $r={18.5}><svg width="21" height="15" viewBox="0 0 21 15"><rect x=".7" y=".7" width="19.6" height="13.6" rx="1.8" fill="none" stroke="#eeeef1" strokeWidth="1.3" /><path d="M4 4.700h13.500M4 7.500h13.500" stroke="#eeeef1" strokeWidth="1.5" strokeDasharray="1.6 1.4" /><path d="M5 11h11" stroke="#eeeef1" strokeWidth="1.4" /></svg></TrayItem>
          <TrayItem $r={9}><svg width="21" height="15" viewBox="0 0 21 15"><g fill="none" stroke="#f2f2f4" strokeWidth="1.6"><path d="M1 5.5c5.500-5.300 13.500-5.300 19 0M4 8.700c4-3.700 9-3.700 13 0M7 11.500c2.200-2 4.800-2 7 0" /></g><circle cx="10.5" cy="13" r="1.7" fill="#f2f2f4" /></svg></TrayItem>
          <TrayItem $r={10.5}><svg width="20" height="16" viewBox="0 0 20 16"><g fill="none" strokeWidth="1.4"><path d="M1 5.5h3l4.500-4v13L4 10.500H1zM11 5c1.500 2 1.500 4 0 6M13.500 3c2.500 3 2.500 7 0 10" stroke="#f2f2f4" /><path d="M16 1.500c3.500 4 3.500 9 0 13" stroke="#6c6877" /></g></svg></TrayItem>
          <TrayItem $r={0}><svg width="21" height="14" viewBox="0 0 21 14"><rect x=".8" y=".8" width="17" height="12.4" rx="2.5" fill="none" stroke="#f2f2f4" strokeWidth="1.4" /><rect x="3" y="3" width="4.5" height="8" fill="#f2f2f4" /><path d="M19.700 5v4" stroke="#f2f2f4" strokeWidth="1.8" /></svg></TrayItem>
          <Clock><div>19:48</div><div>25/04/2024</div></Clock>
          <TrayItem $r={21}><svg width="17" height="19" viewBox="0 0 17 19"><path d="M8.5 1C5 1 3 3.500 3 7v3.500L1 14v1h15v-1l-2-3.500V7c0-3.500-2-6-5.500-6zM6 15.500c.5 3 4.500 3 5 0" fill="none" stroke="#f2f2f4" strokeWidth="1.5" strokeLinejoin="round" /></svg></TrayItem>
          <Copilot />
        </Tray>
      </Taskbar>
    </Desktop>
  );
}
